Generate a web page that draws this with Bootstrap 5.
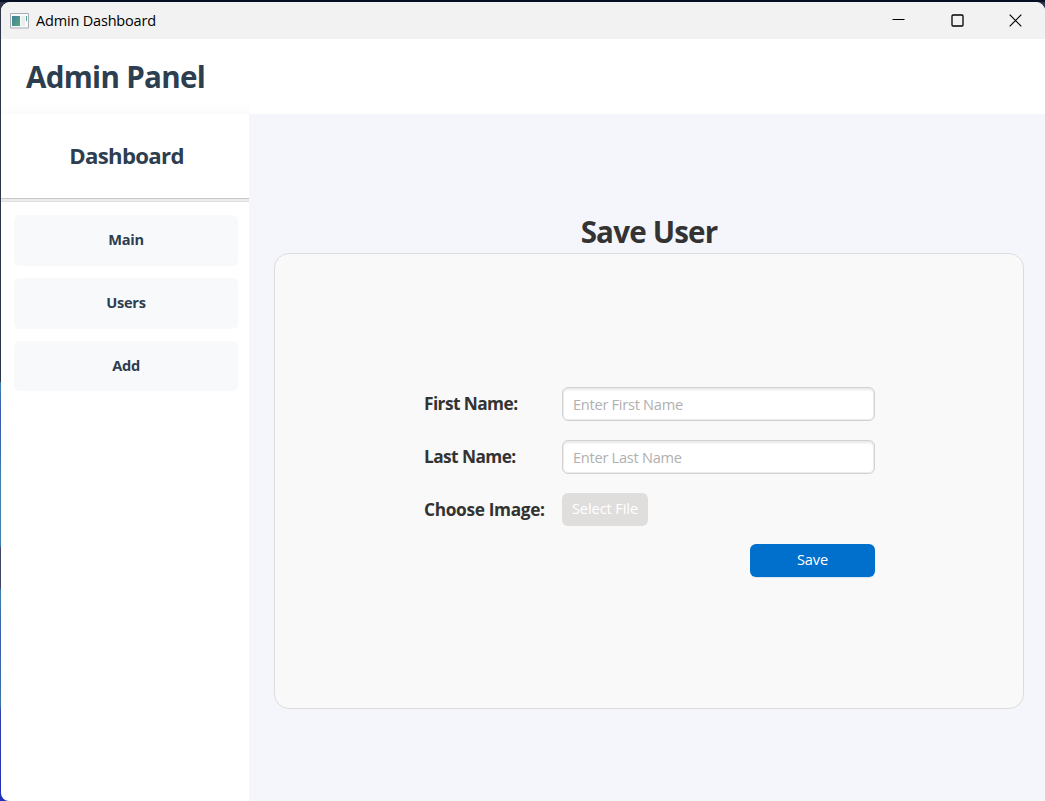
<!DOCTYPE html>
<html lang="en">
<head>
<meta charset="utf-8">
<meta name="viewport" content="width=device-width, initial-scale=1">
<title>Admin Dashboard</title>
<link rel="stylesheet" href="https://cdn.jsdelivr.net/npm/bootstrap@5.3.0/dist/css/bootstrap.min.css">
<style>
body{height:801px;padding:2px 0 0 1px;overflow:hidden;font-family:"Open Sans","Noto Sans",sans-serif;color:#333;
 background:linear-gradient(#051024 0 2px,#2f3548 2px 381px,#3f82b0 383px,#3b56b0 415px,#3d80ac 480px,#3d80a8 546px,#3f4468 548px 588px,#3c80ac 590px,#3b5cb0 640px,#3d76a8 705px,#2c40b0 712px,#2030b8)}
.window{height:799px;border-radius:9px 9px 0 8px;background:#fff}
.titlebar{height:37px;background:#f2f2f2;padding-left:9px;color:#000;font-size:14.5px;letter-spacing:-.18px}
.titlebar .app-icon{margin-right:7px}
.caption-btn{width:58.5px;height:37px}
.header{height:75px;padding:0 25px;background:linear-gradient(#fff 65px,#fbfbfb) left/249px 100% no-repeat #fff}
.header h1{font-size:29.6px;color:#2c3e50;line-height:75px;letter-spacing:-.7px}
.sidebar{width:248px}
.sidebar h2{height:84px;font-size:22.2px;line-height:84px;color:#2c3e50;padding-left:3px;letter-spacing:-.68px}
.rule{height:4px;background:#e9ebed;border-top:1px solid #c8c8c8;border-bottom:1px solid #dedede}
.side-menu{padding:13px 11px 0 13px;gap:12px}
.side-btn{height:51px;border:0;border-radius:6px;background:#f8f9fb;color:#2c3e50;font-size:14.6px;font-weight:700;padding:0 0 2px;letter-spacing:-.3px}
.side-btn:last-child{height:50px;padding-bottom:1px}
.content-area{background:#f4f6fb;padding:0 21px 0 25px}
.content-area h2{font-size:29.6px;line-height:40px;margin-top:98px;padding-bottom:1px;letter-spacing:-.83px}
.panel{height:456px;background:#f9f9f9;border:1px solid #dcdcdc;border-radius:15px;padding:133px 148px 0 149px}
.form-row{margin-bottom:19px}
.form-row.file-row{margin-bottom:18px}
.label-col{width:138px;font-size:17.3px;font-weight:700;line-height:34px;letter-spacing:-.57px}
.label-col.wide-label{letter-spacing:-.34px;line-height:33px}
.panel .form-control{width:313px;height:34px;border:1px solid #d2d2d2;border-radius:6px;padding:0 10px;font-size:14.6px;letter-spacing:-.27px;box-shadow:inset 0 0 0 1px #ececec,inset 0 2px 2px #e8e8e8}
.panel .form-control::placeholder{color:#b0b0b0;opacity:1}
.panel .btn{height:33px;border:0;border-radius:6px;font-size:14.6px;padding:0 0 2px;color:#fff;letter-spacing:-.1px}
.panel .pick{width:86px;background:#dfdedd}
.panel .save{width:125px;background:#0070cc;box-shadow:0 1px #dce5ee}
.t{white-space:nowrap;display:inline-block}
</style>
</head>
<body>
<div class="window d-flex flex-column overflow-hidden">
 <div class="titlebar d-flex align-items-center flex-shrink-0">
  <svg width="19" height="16" viewBox="0 0 19 16" class="app-icon"><defs><linearGradient id="g" x2="1" y2="1"><stop stop-color="#3f7f9c"/><stop offset="1" stop-color="#58a878"/></linearGradient></defs><path fill="#f8fafb" stroke="#a5adb5" d="M.5.5h18v14.500H.5z"/><path fill="url(#g)" d="M2 3h8v10H2z"/><path fill="#e9eeee" d="M11 3h4v10h-4z"/><path fill="#58a593" d="M16 3h1v5h-1z"/></svg>
  <span class="t">Admin Dashboard</span>
  <div class="ms-auto d-flex">
   <div class="caption-btn d-flex align-items-center justify-content-center"><svg width="13" height="13"><path stroke="#000" d="M.5 5.500h12"/></svg></div>
   <div class="caption-btn d-flex align-items-center justify-content-center"><svg width="13" height="13"><rect x="1" y="1" width="11" height="11" rx="1" fill="none" stroke="#000" stroke-width="1.300"/></svg></div>
   <div class="caption-btn d-flex align-items-center justify-content-center"><svg width="13" height="13"><path stroke="#000" stroke-width="1.200" d="M.7.7l11.600 11.600M12.300.7.7 12.300"/></svg></div>
  </div>
 </div>
 <header class="header flex-shrink-0"><h1 class="fw-bold mb-0"><span class="t">Admin Panel</span></h1></header>
 <div class="d-flex flex-grow-1">
  <aside class="sidebar flex-shrink-0">
   <h2 class="fw-bold text-center mb-0"><span class="t">Dashboard</span></h2>
   <div class="rule"></div>
   <nav class="side-menu d-flex flex-column">
    <button class="btn side-btn"><span class="t">Main</span></button>
    <button class="btn side-btn"><span class="t">Users</span></button>
    <button class="btn side-btn"><span class="t">Add</span></button>
   </nav>
  </aside>
  <main class="content-area flex-grow-1">
   <h2 class="fw-bold text-center mb-0"><span class="t">Save User</span></h2>
   <form class="panel">
    <div class="form-row d-flex"><label class="label-col" for="first"><span class="t">First Name:</span></label><input id="first" class="form-control" placeholder="Enter First Name"></div>
    <div class="form-row d-flex"><label class="label-col" for="last"><span class="t">Last Name:</span></label><input id="last" class="form-control" placeholder="Enter Last Name"></div>
    <div class="form-row file-row d-flex"><span class="label-col wide-label"><span class="t d-block">Choose Image:</span></span><button type="button" class="btn pick"><span class="t">Select File</span></button></div>
    <div class="d-flex justify-content-end"><button type="button" class="btn save"><span class="t">Save</span></button></div>
   </form>
  </main>
 </div>
</div>
<script src="https://cdn.jsdelivr.net/npm/bootstrap@5.3.0/dist/js/bootstrap.bundle.min.js"></script>
</body>
</html>
